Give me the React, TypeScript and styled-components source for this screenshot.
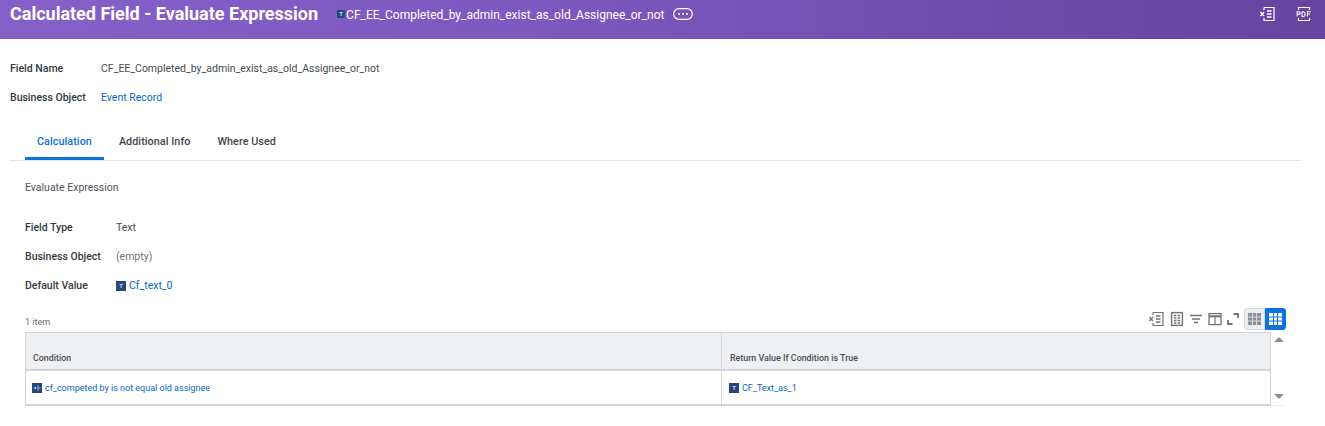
import React from 'react';
import styled, { createGlobalStyle } from 'styled-components';

const Global = createGlobalStyle`
  html, body {
    margin: 0;
    padding: 0;
    background: #fff;
    font-family: Roboto, "Liberation Sans", sans-serif;
    overflow: hidden;
  }
`;

const Page = styled.div`
  width: 1325px;
  height: 426px;
  display: flex;
  flex-direction: column;
`;

const Header = styled.header`
  height: 39px;
  flex: none;
  box-sizing: border-box;
  padding: 0 12px 11px 10px;
  display: flex;
  align-items: center;
  color: #fff;
  background: linear-gradient(90deg, #8660c9 0%, #7d58c0 40%, #6f4ca9 75%, #66449e 100%);
`;

const Title = styled.h1`
  margin: 0 19px 0 0;
  font-size: 18px;
  line-height: 28px;
  font-weight: 700;
  white-space: nowrap;
`;

const HeaderName = styled.span`
  font-size: 12px;
  white-space: nowrap;
  margin: 1px 9px 0 1px;
`;

const TypeBadge = styled.span<{ $size?: number }>`
  flex: none;
  display: inline-flex;
  align-items: center;
  justify-content: center;
  width: ${({ $size }) => $size ?? 10}px;
  height: ${({ $size }) => $size ?? 10}px;
  background: #26477a;
  color: #cfd8e6;
  font-size: 6px;
  line-height: 1;
  font-weight: 700;
`;

const HeaderActions = styled.div`
  margin-left: auto;
  display: flex;
  align-items: center;
  gap: 18px;
`;

const Body = styled.main`
  flex: 1;
  display: flex;
  flex-direction: column;
  padding: 15px 24px 0 10px;
`;

const Row = styled.div<{ $label: number }>`
  height: 29px;
  display: grid;
  grid-template-columns: ${({ $label }) => $label}px 1fr;
  align-items: center;
  font-size: 10.5px;
  color: #444b53;
`;

const Label = styled.span`
  font-weight: 500;
  color: #333a42;
`;

const Link = styled.a`
  color: #0b66c2;
  display: inline-flex;
  align-items: center;
  gap: 3px;
  text-decoration: none;
`;

const Muted = styled.span`
  color: #6f757c;
`;

const Tabs = styled.nav`
  margin-top: 15px;
  height: 33px;
  display: flex;
  border-bottom: 1px solid #e2e4e8;
`;

const Tab = styled.a<{ $active?: boolean }>`
  box-sizing: border-box;
  height: 33px;
  padding: 0 12px 1px;
  margin-left: ${({ $active }) => ($active ? '15px' : '3px')};
  display: flex;
  align-items: center;
  font-size: 10.8px;
  font-weight: 500;
  letter-spacing: 0.05px;
  color: ${({ $active }) => ($active ? '#0b72d8' : '#3f454c')};
  border-bottom: 3px solid ${({ $active }) => ($active ? '#0b72d8' : 'transparent')};
`;

const Section = styled.section`
  padding: 0 0 0 15px;
  display: flex;
  flex-direction: column;
`;

const Subtitle = styled.div`
  margin: 20px 0 19px;
  font-size: 10.5px;
  line-height: 13px;
  color: #50565d;
`;

const GridBar = styled.div`
  margin-top: 8px;
  height: 24px;
  display: flex;
  align-items: center;
  justify-content: space-between;
  width: 1261px;
`;

const ItemCount = styled.span`
  font-size: 9px;
  color: #666c73;
  padding-top: 3px;
`;

const Tools = styled.div`
  display: flex;
  align-items: center;
  gap: 3px;
  color: #6f7479;
  margin-top: -2px;
`;

const ToggleGroup = styled.div`
  display: flex;
  height: 22px;
  margin-left: 1px;
`;

const Toggle = styled.span<{ $on?: boolean }>`
  width: 21px;
  box-sizing: border-box;
  display: flex;
  align-items: center;
  justify-content: center;
  border-radius: ${({ $on }) => ($on ? '0 3px 3px 0' : '3px 0 0 3px')};
  background: ${({ $on }) => ($on ? '#0b72e0' : '#eceef0')};
  border: 1px solid ${({ $on }) => ($on ? '#0b72e0' : '#d8dadd')};
  color: ${({ $on }) => ($on ? '#fff' : '#8b9096')};
`;

const GridWrap = styled.div`
  display: flex;
  width: 1261px;
`;

const Table = styled.div`
  flex: none;
  width: 1246px;
  box-sizing: border-box;
  border: 1px solid #d2d4d7;
  border-bottom-width: 2px;
  display: grid;
  grid-template-columns: 695px 1fr;
  grid-template-rows: 38px 33px;
`;

const HeadCell = styled.div<{ $split?: boolean }>`
  background: #eff0f2;
  border-bottom: 2px solid #d2d4d7;
  border-left: ${({ $split }) => ($split ? '1px solid #d8dadc' : '0')};
  display: flex;
  align-items: flex-end;
  padding: 0 7px 6px ${({ $split }) => ($split ? '8px' : '7px')};
  font-size: 8.9px;
  font-weight: 500;
  color: #494f56;
`;

const Cell = styled.div<{ $split?: boolean }>`
  border-left: ${({ $split }) => ($split ? '1px solid #d8dadc' : '0')};
  display: flex;
  align-items: center;
  padding: 0 7px 0 ${({ $split }) => ($split ? '7px' : '6px')};
  font-size: 9px;
`;

const ScrollRail = styled.div`
  flex: 1;
  display: flex;
  flex-direction: column;
  align-items: center;
  justify-content: space-between;
  padding: 5px 0 6px;
  box-sizing: border-box;
  border-bottom: 1px solid #e9eaec;
`;

const ScrollArrow = styled.span<{ $down?: boolean }>`
  width: 0;
  height: 0;
  border-left: 5px solid transparent;
  border-right: 5px solid transparent;
  ${({ $down }) =>
    $down ? 'border-top: 5px solid #8a8d91;' : 'border-bottom: 5px solid #8a8d91;'}
`;

const ExcelIcon = () => (
  <svg width="18" height="18" viewBox="0 0 18 18" fill="none" stroke="currentColor">
    <path d="M5 2.5h10v13H5V13M5 5V2.5" strokeWidth="1.2" />
    <path d="M8 6h4.5M8 9h4.5M8 12h4.5" strokeWidth="1.4" />
    <path d="M1.5 7l3.5 4M5 7l-3.5 4" strokeWidth="1.3" />
  </svg>
);

const PdfIcon = () => (
  <svg width="18" height="18" viewBox="0 0 18 18" fill="none" stroke="currentColor">
    <path d="M3.5 5V2.5h11V5M3.5 13v2.5h11V13" strokeWidth="1.2" />
    <path d="M2.2 11.5V6.7h1.6a1.2 1.2 0 0 1 0 2.6H2.2M7 6.7v4.8h1a2 2 0 0 0 2-2.4 2 2 0 0 0-2-2.4H7M12.4 11.5V6.7h3.2M12.4 9h2.6" strokeWidth="1.1" />
  </svg>
);

const DotsIcon = () => (
  <svg width="20" height="12" viewBox="0 0 20 12" fill="currentColor">
    <rect x="0.7" y="0.7" width="18.6" height="10.6" rx="5.3" fill="none" stroke="currentColor" strokeWidth="1.2" />
    <circle cx="6" cy="6" r="1" />
    <circle cx="10" cy="6" r="1" />
    <circle cx="14" cy="6" r="1" />
  </svg>
);

const ColumnsIcon = () => (
  <svg width="16" height="16" viewBox="0 0 16 16" fill="none" stroke="currentColor">
    <rect x="2.6" y="1.6" width="10.8" height="12.8" strokeWidth="1.4" />
    <path d="M5 4.5h2.4M8.6 4.5H11M5 7h2.4M8.6 7H11M5 9.5h2.4M8.6 9.5H11M5 12h2.4M8.6 12H11" strokeWidth="1.4" />
  </svg>
);

const FilterIcon = () => (
  <svg width="16" height="16" viewBox="0 0 16 16" stroke="currentColor">
    <path d="M2 4.5h12M4 8h8M6 11.5h4" strokeWidth="1.6" />
  </svg>
);

const LayoutIcon = () => (
  <svg width="16" height="16" viewBox="0 0 16 16" fill="none" stroke="currentColor">
    <rect x="2" y="2.6" width="12" height="11" strokeWidth="1.3" />
    <path d="M2 5.3h12" strokeWidth="2" />
    <path d="M8 5.3v8.3" strokeWidth="1.2" />
  </svg>
);

const ExpandIcon = () => (
  <svg width="14" height="14" viewBox="0 0 14 14" fill="none" stroke="currentColor" strokeWidth="1.8">
    <path d="M7.5 2h4.5v4M2 8v4h4.5" />
  </svg>
);

// filled cells with thin rules in the toggle's own background colour
const GridIcon = ({ rule }: { rule: string }) => (
  <svg width="13" height="12" viewBox="0 0 13 12" stroke={rule} strokeWidth="1">
    <rect x="0" y="0" width="13" height="12" fill="currentColor" stroke="none" />
    <path d="M4.5 0v12M8.5 0v12M0 4h13M0 8h13" />
  </svg>
);

const ConditionGlyph = () => (
  <svg width="8" height="6" viewBox="0 0 8 6" fill="none" stroke="#cfd8e6" strokeWidth="0.8">
    <path d="M0.5 3h2.5M2 1.8L3.2 3 2 4.2M5 0.5v5M5.5 3h2" />
  </svg>
);

const App = () => (
  <Page>
    <Global />
    <Header>
      <Title>Calculated Field - Evaluate Expression</Title>
      <TypeBadge $size={8}>T</TypeBadge>
      <HeaderName>CF_EE_Completed_by_admin_exist_as_old_Assignee_or_not</HeaderName>
      <DotsIcon />
      <HeaderActions>
        <ExcelIcon />
        <PdfIcon />
      </HeaderActions>
    </Header>
    <Body>
      <Row $label={91}>
        <Label>Field Name</Label>
        <span>CF_EE_Completed_by_admin_exist_as_old_Assignee_or_not</span>
      </Row>
      <Row $label={91}>
        <Label>Business Object</Label>
        <Link>Event Record</Link>
      </Row>
      <Tabs>
        <Tab $active>Calculation</Tab>
        <Tab>Additional Info</Tab>
        <Tab>Where Used</Tab>
      </Tabs>
      <Section>
        <Subtitle>Evaluate Expression</Subtitle>
        <Row $label={91}>
          <Label>Field Type</Label>
          <span>Text</span>
        </Row>
        <Row $label={91}>
          <Label>Business Object</Label>
          <Muted>(empty)</Muted>
        </Row>
        <Row $label={91}>
          <Label>Default Value</Label>
          <Link>
            <TypeBadge>T</TypeBadge>
            Cf_text_0
          </Link>
        </Row>
        <GridBar>
          <ItemCount>1 item</ItemCount>
          <Tools>
            <ExcelIcon />
            <ColumnsIcon />
            <FilterIcon />
            <LayoutIcon />
            <ExpandIcon />
            <ToggleGroup>
              <Toggle>
                <GridIcon rule="#d5d7da" />
              </Toggle>
              <Toggle $on>
                <GridIcon rule="#0b72e0" />
              </Toggle>
            </ToggleGroup>
          </Tools>
        </GridBar>
        <GridWrap>
          <Table>
            <HeadCell>Condition</HeadCell>
            <HeadCell $split>Return Value If Condition is True</HeadCell>
            <Cell>
              <Link>
                <TypeBadge>
                  <ConditionGlyph />
                </TypeBadge>
                cf_competed by is not equal old assignee
              </Link>
            </Cell>
            <Cell $split>
              <Link>
                <TypeBadge>T</TypeBadge>
                CF_Text_as_1
              </Link>
            </Cell>
          </Table>
          <ScrollRail>
            <ScrollArrow />
            <ScrollArrow $down />
          </ScrollRail>
        </GridWrap>
      </Section>
    </Body>
  </Page>
);

export default App;
